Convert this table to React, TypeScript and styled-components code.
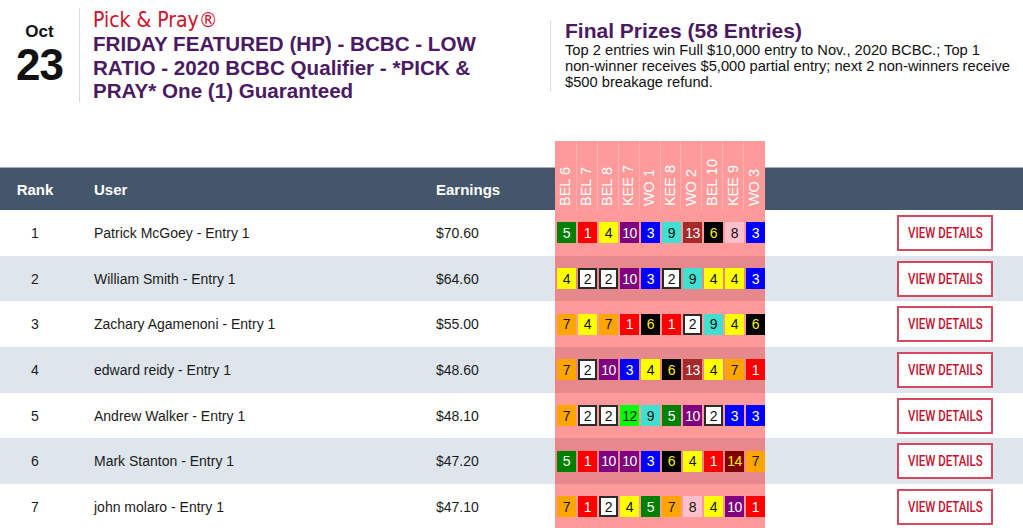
import React from "react";
import styled, { createGlobalStyle } from "styled-components";

const Global = createGlobalStyle`
  html, body { margin: 0; padding: 0; background: #fff; }
  body { font-family: "Liberation Sans", Arial, sans-serif; color: #222; overflow: hidden; }
`;

const Page = styled.div`
  width: 1023px;
  height: 528px;
  overflow: hidden;
`;

const Header = styled.header`
  display: flex;
  align-items: flex-start;
  padding-top: 8px;
  height: 133px;
  box-sizing: border-box;
`;

const DateBlock = styled.div`
  width: 79px;
  height: 94px;
  border-right: 1px solid #dcdcdc;
  display: flex;
  flex-direction: column;
  align-items: center;
  justify-content: center;
  font-weight: bold;
  color: #111;
`;

const Month = styled.div`
  font-size: 17px;
  line-height: 20px;
`;

const Day = styled.div`
  font-size: 44px;
  line-height: 46px;
  letter-spacing: -1px;
`;

const TitleBlock = styled.div`
  width: 415px;
  padding: 0 42px 0 13px;
`;

const Brand = styled.div`
  font-family: "DejaVu Sans Condensed", sans-serif;
  color: #d0112b;
  font-size: 21px;
  line-height: 24px;
`;

const Title = styled.h1`
  margin: 0;
  font-size: 20.6px;
  line-height: 23.5px;
  font-weight: bold;
  color: #4b1a63;
`;

const PrizeBlock = styled.div`
  margin-top: 12px;
  border-left: 1px solid #dcdcdc;
  padding-left: 14px;
  width: 447px;
  height: 72px;
`;

const PrizeTitle = styled.h2`
  margin: 0;
  font-size: 21px;
  line-height: 22px;
  font-weight: bold;
  color: #4b1a63;
`;

const PrizeText = styled.p`
  margin: 0;
  font-size: 14.7px;
  line-height: 16px;
  color: #111;
`;

const Grid = styled.div`
  display: grid;
  grid-template-columns: 70px 366px 119px 210px 1fr;
`;

const HeadRow = styled(Grid)`
  height: 69px;
  margin-top: 8px;
  background: linear-gradient(
    to bottom,
    transparent 0,
    transparent 26px,
    #a4adb7 26px,
    #a4adb7 27px,
    #44566a 27px,
    #44566a 100%
  );
`;

const HeadCell = styled.div<{ $center?: boolean; $pad?: number }>`
  align-self: end;
  height: 42px;
  display: flex;
  align-items: center;
  justify-content: ${(p) => (p.$center ? "center" : "flex-start")};
  padding-left: ${(p) => p.$pad ?? 0}px;
  color: #fff;
  font-weight: bold;
  font-size: 15px;
`;

const RaceHead = styled.div`
  background: #ff9a9a;
  display: flex;
  padding-left: 1px;
`;

const RaceLabel = styled.div`
  width: 21px;
  box-sizing: border-box;
  border-right: 1px solid #ffb0b0;
  display: flex;
  align-items: flex-end;
  justify-content: center;
  padding-bottom: 4px;
  &:last-child { border-right: none; }
`;

const RaceText = styled.span`
  writing-mode: vertical-rl;
  transform: rotate(180deg);
  color: #fff;
  font-size: 14.5px;
  line-height: 15px;
  white-space: nowrap;
`;

const Row = styled(Grid)<{ $alt: boolean }>`
  height: 45.7px;
  background: ${(p) => (p.$alt ? "#dee5ec" : "#fff")};
  font-size: 14px;
  color: #1a1a1a;
`;

const Cell = styled.div<{ $center?: boolean; $pad?: number }>`
  display: flex;
  align-items: center;
  justify-content: ${(p) => (p.$center ? "center" : "flex-start")};
  padding-left: ${(p) => p.$pad ?? 0}px;
`;

const Picks = styled.div<{ $alt: boolean }>`
  background: ${(p) => (p.$alt ? "#e6888c" : "#ff9a9a")};
  display: flex;
  align-items: center;
  padding-left: 2px;
  gap: 2px;
`;

const Saddle = styled.div<{ $bg: string; $fg: string; $outlined: boolean }>`
  width: 19px;
  height: 21px;
  box-sizing: border-box;
  background: ${(p) => p.$bg};
  color: ${(p) => p.$fg};
  border: ${(p) => (p.$outlined ? "2px solid #2a2a2a" : "none")};
  display: flex;
  align-items: center;
  justify-content: center;
  font-size: 14px;
  letter-spacing: -0.5px;
`;

const ActionCell = styled.div`
  display: flex;
  align-items: center;
  justify-content: flex-end;
  padding-right: 30px;
`;

const DetailsButton = styled.button`
  width: 96px;
  height: 36px;
  background: #fff;
  border: 2px solid #d6485f;
  padding: 0;
  display: flex;
  align-items: center;
  justify-content: center;
  cursor: pointer;
`;

const ButtonLabel = styled.span`
  display: inline-block;
  white-space: nowrap;
  font-family: Roboto, "DejaVu Sans Condensed", sans-serif;
  font-weight: 500;
  font-size: 15.5px;
  color: #c8102e;
  transform: scaleX(0.74);
`;

const COLORS: Record<number, [string, string]> = {
  1: ["#ff0000", "#fff"],
  2: ["#fff", "#111"],
  3: ["#0000ff", "#fff"],
  4: ["#ffff00", "#111"],
  5: ["#008000", "#fff"],
  6: ["#000", "#ffee00"],
  7: ["#ffa500", "#111"],
  8: ["#ffc0cb", "#111"],
  9: ["#40e0d0", "#111"],
  10: ["#800080", "#fff"],
  12: ["#00ff00", "#111"],
  13: ["#a52a2a", "#fff"],
  14: ["#800000", "#ffee00"],
};

const races = ["BEL 6", "BEL 7", "BEL 8", "KEE 7", "WO 1", "KEE 8", "WO 2", "BEL 10", "KEE 9", "WO 3"];

const rows = [
  { rank: 1, user: "Patrick McGoey - Entry 1", earn: "$70.60", picks: [5, 1, 4, 10, 3, 9, 13, 6, 8, 3] },
  { rank: 2, user: "William Smith - Entry 1", earn: "$64.60", picks: [4, 2, 2, 10, 3, 2, 9, 4, 4, 3] },
  { rank: 3, user: "Zachary Agamenoni - Entry 1", earn: "$55.00", picks: [7, 4, 7, 1, 6, 1, 2, 9, 4, 6] },
  { rank: 4, user: "edward reidy - Entry 1", earn: "$48.60", picks: [7, 2, 10, 3, 4, 6, 13, 4, 7, 1] },
  { rank: 5, user: "Andrew Walker - Entry 1", earn: "$48.10", picks: [7, 2, 2, 12, 9, 5, 10, 2, 3, 3] },
  { rank: 6, user: "Mark Stanton - Entry 1", earn: "$47.20", picks: [5, 1, 10, 10, 3, 6, 4, 1, 14, 7] },
  { rank: 7, user: "john molaro - Entry 1", earn: "$47.10", picks: [7, 1, 2, 4, 5, 7, 8, 4, 10, 1] },
];

export default function App() {
  return (
    <Page>
      <Global />
      <Header>
        <DateBlock>
          <Month>Oct</Month>
          <Day>23</Day>
        </DateBlock>
        <TitleBlock>
          <Brand>Pick &amp; Pray®</Brand>
          <Title>FRIDAY FEATURED (HP) - BCBC - LOW RATIO - 2020 BCBC Qualifier - *PICK &amp; PRAY* One (1) Guaranteed</Title>
        </TitleBlock>
        <PrizeBlock>
          <PrizeTitle>Final Prizes (58 Entries)</PrizeTitle>
          <PrizeText>
            Top 2 entries win Full $10,000 entry to Nov., 2020 BCBC.; Top 1 non-winner receives $5,000 partial entry; next 2 non-winners receive $500 breakage refund.
          </PrizeText>
        </PrizeBlock>
      </Header>
      <HeadRow>
        <HeadCell $center>Rank</HeadCell>
        <HeadCell $pad={24}>User</HeadCell>
        <HeadCell>Earnings</HeadCell>
        <RaceHead>
          {races.map((r) => (
            <RaceLabel key={r}>
              <RaceText>{r}</RaceText>
            </RaceLabel>
          ))}
        </RaceHead>
        <HeadCell />
      </HeadRow>
      {rows.map((row, i) => {
        const alt = i % 2 === 1;
        return (
          <Row key={row.rank} $alt={alt}>
            <Cell $center>{row.rank}</Cell>
            <Cell $pad={24}>{row.user}</Cell>
            <Cell>{row.earn}</Cell>
            <Picks $alt={alt}>
              {row.picks.map((n, j) => {
                const [bg, fg] = COLORS[n];
                return (
                  <Saddle key={j} $bg={bg} $fg={fg} $outlined={n === 2}>
                    {n}
                  </Saddle>
                );
              })}
            </Picks>
            <ActionCell>
              <DetailsButton>
                <ButtonLabel>VIEW DETAILS</ButtonLabel>
              </DetailsButton>
            </ActionCell>
          </Row>
        );
      })}
    </Page>
  );
}
